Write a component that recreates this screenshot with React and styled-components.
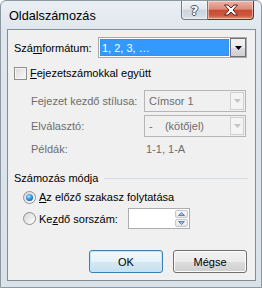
import React from 'react';
import styled, { createGlobalStyle } from 'styled-components';

const Global = createGlobalStyle`
  html, body { margin: 0; padding: 0; background: #ffffff; }
  body { width: 262px; height: 288px; overflow: hidden; }
`;

const Window = styled.div`
  width: 262px;
  height: 288px;
  box-sizing: border-box;
  display: flex;
  flex-direction: column;
  background: linear-gradient(#eaeff4, #dfe6ed 30px, #d9e1e9);
  border: 1px solid #8d97a1;
  border-radius: 6px 6px 0 0;
  padding: 0 5px 6px 6px;
  font-family: "Liberation Sans", Arial, sans-serif;
  font-size: 11px;
  color: #000;
`;

const TitleBar = styled.div`
  height: 28px;
  display: flex;
  align-items: flex-start;
`;

const Title = styled.div`
  padding: 6px 0 0 2px;
  line-height: 18px;
  font-size: 12.7px;
`;

const CaptionButtons = styled.div`
  margin-left: auto;
  margin-right: 2px;
  display: flex;
`;

const CaptionButton = styled.div`
  width: ${(p) => p.$w}px;
  height: 19px;
  box-sizing: border-box;
  display: flex;
  align-items: center;
  justify-content: center;
  border: 1px solid ${(p) => (p.$close ? '#6e2e24' : '#6f7b88')};
  border-top: none;
  border-left: ${(p) => (p.$close ? 'none' : undefined)};
  border-radius: ${(p) => (p.$close ? '0 0 4px 0' : '0 0 0 4px')};
  background: ${(p) =>
    p.$close
      ? 'linear-gradient(#edb3a5, #dd8b79 45%, #c64b33 52%, #d0583f 80%, #e58c72)'
      : 'linear-gradient(#f1f4f7, #e0e6ec 45%, #cbd3dc 52%, #d6dce4 85%, #e4e9ee)'};
  box-shadow: inset 0 0 0 1px rgba(255, 255, 255, 0.45);
`;

const HelpGlyph = styled.span`
  font-family: "DejaVu Sans", sans-serif;
  font-weight: bold;
  font-size: 13px;
  line-height: 13px;
  color: #fff;
  text-shadow: 1px 0 #4d5661, -1px 0 #4d5661, 0 1px #4d5661, 0 -1px #4d5661;
`;

const Client = styled.div`
  flex: 1;
  display: flex;
  flex-direction: column;
  border: 1px solid #858d96;
  background: #f0f0f0;
  padding-bottom: 7px;
`;

const Row = styled.div`
  display: flex;
  align-items: center;
  height: ${(p) => p.$h || 16}px;
  margin-top: ${(p) => p.$mt || 0}px;
  padding-left: ${(p) => p.$pl || 0}px;
  padding-right: ${(p) => p.$pr || 0}px;
  color: ${(p) => (p.$disabled ? '#6d6d6d' : '#000')};
`;

const Label = styled.span`
  flex: 0 0 ${(p) => p.$w}px;
  white-space: nowrap;
`;

const Combo = styled.div`
  width: ${(p) => p.$w}px;
  height: ${(p) => p.$h}px;
  box-sizing: border-box;
  display: flex;
  border: 1px solid ${(p) => (p.$disabled ? '#b5b5b5' : '#a5a9b0')};
  background: ${(p) => (p.$disabled ? '#f0f0f0' : '#fff')};
  padding: ${(p) => (p.$disabled ? '0' : '1px')};
`;

const ComboText = styled.div`
  flex: 1;
  display: flex;
  align-items: center;
  padding-left: 4px;
  color: #6d6d6d;
  white-space: pre;
`;

const Selection = styled.div`
  flex: 1;
  display: flex;
  align-items: center;
  padding-left: 2px;
  margin-right: 1px;
  background: #3399ff;
  color: #fff;
  outline: 1px dotted #cc6600;
  outline-offset: -1px;
`;

const DropButton = styled.div`
  width: ${(p) => (p.$disabled ? 14 : 16)}px;
  box-sizing: border-box;
  display: flex;
  align-items: center;
  justify-content: center;
  border: 1px solid ${(p) => (p.$disabled ? '#d0d0d0' : '#707070')};
  margin: ${(p) => (p.$disabled ? '1px' : '-1px -1px -1px 0')};
  background: ${(p) =>
    p.$disabled ? '#f4f4f4' : 'linear-gradient(#f2f2f2, #ebebeb 50%, #dddddd 51%, #cfcfcf)'};
`;

const Arrow = ({ color }) => (
  <svg width="7" height="4" viewBox="0 0 7 4">
    <polygon points="0,0 7,0 3.5,4" fill={color} />
  </svg>
);

const CheckBox = styled.div`
  width: 13px;
  height: 13px;
  box-sizing: border-box;
  margin-left: 6px;
  margin-right: 3px;
  border: 1px solid #8e8f8f;
  background: linear-gradient(135deg, #d8d8d8, #f4f4f4 80%, #fbfbfb);
  box-shadow: inset 0 0 0 1px #f5f5f5;
`;

const Radio = styled.div`
  width: 13px;
  height: 13px;
  box-sizing: border-box;
  margin-left: 15px;
  margin-right: 3px;
  border-radius: 50%;
  border: 1px solid #8e8f8f;
  background: linear-gradient(135deg, #d4d4d4, #f6f6f6 75%, #ffffff);
  display: flex;
  align-items: center;
  justify-content: center;
`;

const RadioDot = styled.div`
  width: 7px;
  height: 7px;
  border-radius: 50%;
  background: radial-gradient(circle at 40% 35%, #b9ecff 0, #55b3f0 30%, #1c64c4 70%, #134c99);
`;

const Section = styled.div`
  flex: 1;
  height: 1px;
  margin-left: 6px;
  background: #d5dde5;
`;

const Spin = styled.div`
  width: 62px;
  height: 21px;
  box-sizing: border-box;
  display: flex;
  justify-content: flex-end;
  border: 1px solid #abadb3;
  background: #fff;
  padding: 1px;
`;

const SpinColumn = styled.div`
  width: 13px;
  display: flex;
  flex-direction: column;
  gap: 1px;
`;

const SpinHalf = styled.div`
  flex: 1;
  display: flex;
  align-items: center;
  justify-content: center;
  border: 1px solid #c2c8cf;
  border-radius: 2px;
  background: linear-gradient(#f7f7f7, #e6e6e6);
`;

const SpinArrow = ({ up }) => (
  <svg width="7" height="4" viewBox="0 0 7 4">
    <polygon
      points={up ? '0.5,3.5 6.5,3.5 3.5,0.5' : '0.5,0.5 6.5,0.5 3.5,3.5'}
      fill="#9bbde0"
      stroke="#4d6f9a"
      strokeWidth="0.8"
    />
  </svg>
);

const ButtonRow = styled.div`
  margin-top: auto;
  display: flex;
  justify-content: flex-end;
  gap: 10px;
  padding-right: 8px;
`;

const Button = styled.div`
  width: 74px;
  height: 23px;
  box-sizing: border-box;
  display: flex;
  align-items: center;
  justify-content: center;
  border-radius: 3px;
  border: 1px solid ${(p) => (p.$default ? '#3c7fb1' : '#707070')};
  background: ${(p) =>
    p.$default
      ? 'linear-gradient(#f0f8fc, #e6f2f9 50%, #d5e8f3 51%, #c6e0ee)'
      : 'linear-gradient(#f2f2f2, #ebebeb 50%, #dddddd 51%, #cfcfcf)'};
  box-shadow: inset 0 0 0 1px ${(p) => (p.$default ? '#bfe6fa' : '#fcfcfc')};
`;

const U = styled.span`
  text-decoration: underline;
`;

export default function App() {
  return (
    <>
      <Global />
      <Window>
        <TitleBar>
          <Title>Oldalszámozás</Title>
          <CaptionButtons>
            <CaptionButton $w={27}>
              <HelpGlyph>?</HelpGlyph>
            </CaptionButton>
            <CaptionButton $w={46} $close>
              <svg width="16" height="12" viewBox="0 0 16 12">
                <path
                  d="M1.5 1 H5 L8 4 L11 1 H14.5 L10 6 L14.5 11 H11 L8 8 L5 11 H1.5 L6 6 Z"
                  fill="#fff"
                  stroke="#5b2018"
                  strokeWidth="1"
                  strokeLinejoin="round"
                />
              </svg>
            </CaptionButton>
          </CaptionButtons>
        </TitleBar>
        <Client>
          <Row $h={21} $mt={7} $pl={6}>
            <Label $w={84}>
              Szá<U>m</U>formátum:
            </Label>
            <Combo $w={149} $h={21}>
              <Selection>1, 2, 3, …</Selection>
              <DropButton>
                <Arrow color="#000" />
              </DropButton>
            </Combo>
          </Row>
          <Row $mt={7}>
            <CheckBox />
            <span>
              <U>F</U>ejezetszámokkal együtt
            </span>
          </Row>
          <Row $h={22} $mt={9} $pl={23} $disabled>
            <Label $w={113}>Fejezet kezdő stílusa:</Label>
            <Combo $w={102} $h={22} $disabled>
              <ComboText>Címsor 1</ComboText>
              <DropButton $disabled>
                <Arrow color="#c4c4c4" />
              </DropButton>
            </Combo>
          </Row>
          <Row $h={22} $mt={3} $pl={23} $disabled>
            <Label $w={113}>Elválasztó:</Label>
            <Combo $w={102} $h={22} $disabled>
              <ComboText>{'-    (kötőjel)'}</ComboText>
              <DropButton $disabled>
                <Arrow color="#c4c4c4" />
              </DropButton>
            </Combo>
          </Row>
          <Row $mt={4} $pl={23} $disabled>
            <Label $w={115}>Példák:</Label>
            <span>1-1, 1-A</span>
          </Row>
          <Row $mt={13} $pl={6} $pr={7}>
            <span>Számozás módja</span>
            <Section />
          </Row>
          <Row $mt={3}>
            <Radio>
              <RadioDot />
            </Radio>
            <span>
              <U>A</U>z előző szakasz folytatása
            </span>
          </Row>
          <Row $h={21} $mt={3}>
            <Radio />
            <Label $w={89}>
              Ke<U>z</U>dő sorszám:
            </Label>
            <Spin>
              <SpinColumn>
                <SpinHalf>
                  <SpinArrow up />
                </SpinHalf>
                <SpinHalf>
                  <SpinArrow />
                </SpinHalf>
              </SpinColumn>
            </Spin>
          </Row>
          <ButtonRow>
            <Button $default>OK</Button>
            <Button>Mégse</Button>
          </ButtonRow>
        </Client>
      </Window>
    </>
  );
}
